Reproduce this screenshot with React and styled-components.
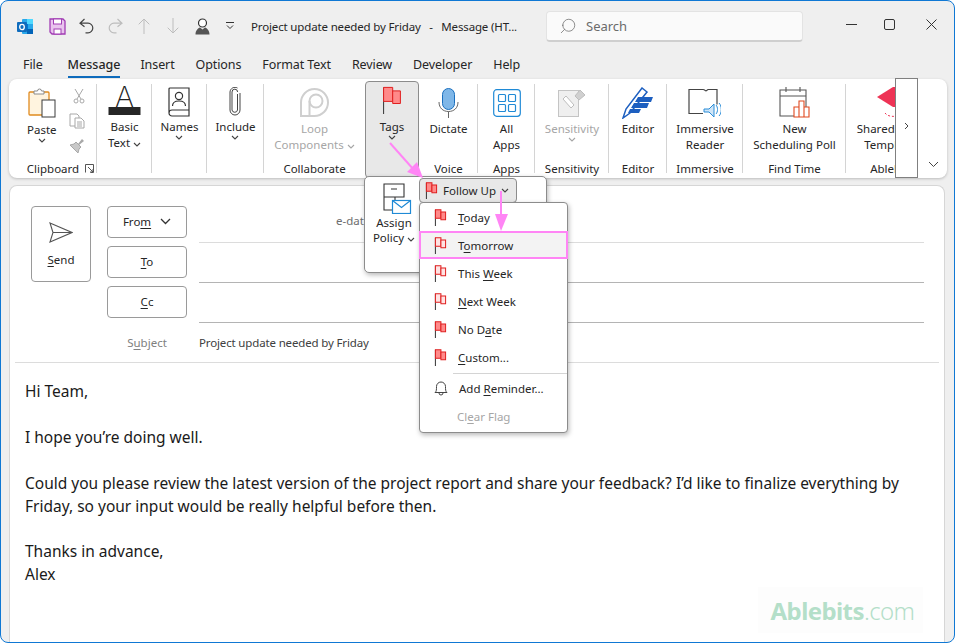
import React from 'react';
import styled, { createGlobalStyle } from 'styled-components';
import { Search } from 'lucide-react';

const GlobalStyle = createGlobalStyle`
  html, body {
    margin: 0;
    width: 955px;
    height: 643px;
    overflow: hidden;
    background: #fff;
  }
  * { box-sizing: border-box; }
  u { text-underline-offset: 2px; }
`;

const UI_FONT = `"Noto Sans", "Open Sans", "Liberation Sans", sans-serif`;

const Frame = styled.div`
  position: relative;
  width: 955px;
  height: 643px;
  display: flex;
  flex-direction: column;
  background: #efefef;
  border: 1px solid #0f78d4;
  border-radius: 8px;
  overflow: hidden;
  font-family: ${UI_FONT};
  font-size: 11.5px;
  color: #262626;
`;

const TitleBar = styled.header`
  height: 50px;
  flex: none;
  display: flex;
  align-items: center;
  padding: 0 3px 0 9px;
`;

const QatSlot = styled.div`
  width: ${p => p.$w}px;
  flex: none;
  display: flex;
  justify-content: center;
  align-items: center;
`;

const WindowTitle = styled.div`
  width: 302px;
  flex: none;
  padding-left: 7px;
  white-space: pre;
  letter-spacing: -0.15px;
`;

const SearchBox = styled.div`
  width: 257px;
  height: 31px;
  flex: none;
  display: flex;
  align-items: center;
  gap: 9px;
  padding-left: 12px;
  background: #fafafa;
  border: 1px solid #e3e3e3;
  border-bottom: 2px solid #cfcfcf;
  border-radius: 4px;
  color: #6b6b6b;
  font-size: 13px;
`;

const WindowControls = styled.div`
  margin-left: auto;
  margin-bottom: 3px;
  display: flex;
`;

const WindowButton = styled.div`
  width: ${p => p.$w}px;
  display: flex;
  justify-content: center;
  align-items: center;
`;

const TabStrip = styled.nav`
  height: 28px;
  flex: none;
  display: flex;
  align-items: center;
  gap: 21px;
  padding-left: 22px;
  font-size: 12.5px;
`;

const Tab = styled.div`
  height: 26px;
  display: flex;
  align-items: center;
  margin-right: ${p => p.$extra || 0}px;
  letter-spacing: ${p => (p.$active ? 0 : -0.1)}px;
  font-weight: ${p => (p.$active ? 500 : 400)};
  border-bottom: 2px solid ${p => (p.$active ? '#0f6cbd' : 'transparent')};
`;

const Ribbon = styled.section`
  position: relative;
  height: 99px;
  flex: none;
  display: flex;
  margin: 0 7px 0 8px;
  background: #fff;
  border-radius: 8px;
  box-shadow: 0 1px 3px rgba(0, 0, 0, 0.22);
`;

const Group = styled.div`
  position: relative;
  width: ${p => p.$w}px;
  flex: none;
  display: flex;
  flex-direction: column;
  align-items: center;
  padding-top: 5px;

  &::after {
    content: '';
    display: ${p => (p.$plain ? 'none' : 'block')};
    position: absolute;
    right: 0;
    top: 5px;
    bottom: 5px;
    width: 1px;
    background: #d4d4d4;
  }
`;

const ClippedGroup = styled(Group)`
  overflow: hidden;
  align-items: flex-start;
`;

const GroupBody = styled.div`
  flex: 1;
  width: ${p => (p.$w ? `${p.$w}px` : '100%')};
  display: flex;
  justify-content: center;
`;

const GroupLabel = styled.div`
  height: 17px;
  width: ${p => (p.$w ? `${p.$w}px` : 'auto')};
  flex: none;
  margin-bottom: 1px;
  line-height: 17px;
  text-align: center;
  white-space: nowrap;
`;

const RibbonButton = styled.div`
  display: flex;
  flex-direction: column;
  align-items: center;
  line-height: 16px;
  text-align: center;
  white-space: nowrap;
  color: ${p => (p.$disabled ? '#a6a6a6' : 'inherit')};
`;

const IconBox = styled.div`
  height: ${p => p.$h}px;
  display: flex;
  align-items: ${p => p.$align || 'flex-start'};
  justify-content: center;
`;

const ClipboardRow = styled.div`
  width: 100%;
  display: flex;
  padding-left: 18px;
  gap: 12px;
`;

const SmallTools = styled.div`
  display: flex;
  flex-direction: column;
  align-items: flex-end;
  width: 16px;
  gap: 9px;
  padding-top: 4px;
`;

const Launcher = styled.svg`
  position: absolute;
  right: 3px;
  bottom: 5px;
`;

const TagsButton = styled.div`
  width: 54px;
  height: 97px;
  flex: none;
  margin-top: 2px;
  padding-top: 4px;
  display: flex;
  flex-direction: column;
  align-items: center;
  line-height: 16px;
  background: #e8e8e8;
  border: 1px solid #8c8c8c;
  border-radius: 4px;
`;

const ScrollButton = styled.div`
  position: absolute;
  right: 29px;
  top: -1px;
  width: 23px;
  height: 100px;
  display: flex;
  align-items: center;
  justify-content: center;
  padding-bottom: 4px;
  background: #fff;
  border: 1px solid #808080;
`;

const CollapseButton = styled.div`
  position: absolute;
  right: 8px;
  bottom: 10px;
  line-height: 0;
`;

const Compose = styled.main`
  flex: 1;
  margin: 7px 9px 0 8px;
  padding-top: 20px;
  background: #fff;
  border: 1px solid #d6d6d6;
  border-bottom: 0;
  border-radius: 8px 8px 0 0;
`;

const HeaderArea = styled.div`
  display: flex;
  align-items: flex-start;
  padding: 0 0 4px 21px;
`;

const SendButton = styled.div`
  width: 60px;
  height: 76px;
  flex: none;
  margin-right: 16px;
  padding-top: 15px;
  display: flex;
  flex-direction: column;
  align-items: center;
  gap: 9px;
  border: 1px solid #9a9a9a;
  border-radius: 4px;
`;

const AddressGrid = styled.div`
  display: grid;
  grid-template-columns: 80px 725px;
  column-gap: 12px;
  row-gap: 3px;
`;

const AddressButton = styled.div`
  height: 32px;
  display: flex;
  align-items: center;
  justify-content: center;
  gap: 9px;
  padding-bottom: 1px;
  border: 1px solid #9a9a9a;
  border-radius: 4px;
`;

const FieldLine = styled.div`
  height: 37px;
  border-bottom: 1px solid ${p => (p.$soft ? '#dcdcdc' : '#b4b4b4')};
`;

const Hint = styled.div`
  padding: 7px 0 0 137px;
  color: #6e6e6e;
`;

const SubjectLabel = styled.div`
  height: 32px;
  display: flex;
  align-items: center;
  justify-content: center;
  color: #808080;
`;

const SubjectValue = styled.div`
  height: 32px;
  display: flex;
  align-items: center;
  color: #404040;
  letter-spacing: -0.15px;
`;

const Divider = styled.div`
  height: 1px;
  margin: 0 5px;
  background: #dcdcdc;
`;

const MessageBody = styled.article`
  padding: 17px 0 0 15px;
  font-size: 15.5px;
  line-height: 22.9px;
  color: #1a1a1a;
`;

const Paragraph = styled.p`
  margin: 0 0 22.9px;
  width: 885px;
`;

const Watermark = styled.div`
  position: absolute;
  left: 757px;
  top: 586px;
  width: 165px;
  height: 46px;
  display: flex;
  align-items: center;
  justify-content: center;
  padding-left: 4px;
  background: #fdfdfd;
  color: #b4dfc9;
  font-size: 24px;
  letter-spacing: -0.6px;
`;

const WatermarkStrong = styled.b`
  font-weight: 700;
`;

const WatermarkLight = styled.span`
  font-weight: 300;
`;

const TagsPopup = styled.div`
  position: absolute;
  left: 363px;
  top: 175px;
  width: 183px;
  height: 97px;
  padding: 6px 0 0 0;
  background: #fff;
  border: 1px solid #8c8c8c;
  border-radius: 5px;
  box-shadow: 1px 2px 5px rgba(0, 0, 0, 0.28);
`;

const PolicyButton = styled.div`
  width: 58px;
  display: flex;
  flex-direction: column;
  align-items: center;
  line-height: 15px;
`;

const PolicyGlyph = styled.div`
  height: 30px;
  padding-left: 6px;
  margin-bottom: 2px;
`;

const FollowUpButton = styled.div`
  position: absolute;
  left: 54px;
  top: 1px;
  width: 98px;
  height: 25px;
  display: flex;
  align-items: center;
  gap: 5px;
  padding-left: 5px;
  background: #e8e8e8;
  border: 1px solid #8c8c8c;
  border-radius: 4px;
`;

const FollowUpMenu = styled.div`
  position: absolute;
  left: 54px;
  top: 25px;
  width: 149px;
  height: 231px;
  padding-top: 0;
  background: #fff;
  border: 1px solid #8c8c8c;
  border-radius: 4px;
  box-shadow: 1px 2px 5px rgba(0, 0, 0, 0.28);
`;

const MenuItem = styled.div`
  height: 28px;
  display: flex;
  align-items: center;
  margin: 0 -1px;
  padding-left: ${p => (p.$hot ? 13 : 15)}px;
  gap: 11px;
  color: ${p => (p.$disabled ? '#a6a6a6' : 'inherit')};
  background: ${p => (p.$hot ? '#f3f3f3' : 'transparent')};
  border: ${p => (p.$hot ? '2px solid #ff85f5' : '0')};
`;

const MenuText = styled.span`
  margin-left: ${p => (p.$noIcon ? 23 : 0)}px;
`;

const MenuSeparator = styled.div`
  height: 1px;
  margin: 2px 0 0 33px;
  background: #d4d4d4;
`;

const ArrowLayer = styled.svg`
  position: absolute;
  left: -1px;
  top: -1px;
  pointer-events: none;
`;

const Caret = ({ color = '#444' }) => (
  <svg width="8" height="5" viewBox="0 0 8 5" fill="none">
    <path d="M1 1l3 3 3-3" stroke={color} strokeWidth="1.1" />
  </svg>
);

const OutlookIcon = () => (
  <svg width="17" height="17" viewBox="0 0 17 17">
    <rect x="5" y="1" width="11" height="15" rx="1" fill="#28a8ea" />
    <rect x="10" y="1" width="6" height="5" fill="#50d9ff" />
    <rect x="5" y="6" width="6" height="5" fill="#0078d4" />
    <rect x="10" y="11" width="6" height="5" fill="#0364b8" />
    <rect x="0" y="4" width="10" height="10" rx="1" fill="#0f6cbd" />
    <ellipse cx="5" cy="9" rx="2.3" ry="2.7" fill="none" stroke="#fff" strokeWidth="1.3" />
  </svg>
);

const SaveIcon = () => (
  <svg width="17" height="17" viewBox="0 0 17 17">
    <path d="M1 1h13l2 2v13H3l-2-2z" fill="#e9c4ee" stroke="#a13cb4" strokeWidth="1.3" />
    <rect x="4.5" y="1" width="8" height="5" fill="#fff" stroke="#a13cb4" />
    <rect x="5" y="11" width="7" height="5" fill="#fff" stroke="#a13cb4" />
  </svg>
);

const UndoIcon = ({ color, flip }) => (
  <svg width="15" height="16" viewBox="0 0 15 16" fill="none" style={flip ? { transform: 'scaleX(-1)' } : undefined}>
    <path d="M5.5 1L1 5.2l4.5 3.6M1 5.2h8a4.8 4.8 0 0 1 0 9.6H6.5" stroke={color} strokeWidth="1.2" />
  </svg>
);

const QatArrow = ({ down }) => (
  <svg width="12" height="16" viewBox="0 0 12 16" fill="none" stroke="#bdbdbd" style={down ? { transform: 'scaleY(-1)' } : undefined}>
    <path d="M6 1v15M.7 6.300L6 1l5.300 5.300" />
  </svg>
);

const PersonIcon = () => (
  <svg width="15" height="17" viewBox="0 0 15 17">
    <circle cx="7.5" cy="5" r="4" fill="#fff" stroke="#333" strokeWidth="1.2" />
    <path d="M0.5 16.5c0-4 2.5-6.5 4.5-7l2.5 2 2.5-2c2 .5 4.5 3 4.5 7z" fill="#555" />
  </svg>
);

const QatMore = () => (
  <svg width="10" height="8" viewBox="0 0 10 8" fill="none" stroke="#333">
    <path d="M1 .5h8M2 3.500l3 3 3-3" />
  </svg>
);

const PasteIcon = () => (
  <svg width="28" height="32" viewBox="0 0 28 32">
    <rect x="1" y="5" width="20" height="23" rx="1" fill="#fff4df" stroke="#e08a1e" strokeWidth="1.3" />
    <path d="M6 7V4h3.500a2 2 0 0 1 4 0H16v3z" fill="#fff" stroke="#8a8a8a" />
    <rect x="14" y="13" width="13" height="17" fill="#fff" stroke="#3a3a3a" />
  </svg>
);

const ScissorsIcon = () => (
  <svg width="12" height="16" viewBox="0 0 12 16" fill="none" stroke="#a8a8a8">
    <path d="M2 1l6 10M10 1L4 11" />
    <circle cx="3" cy="13" r="2" />
    <circle cx="9" cy="13" r="2" />
  </svg>
);

const CopyIcon = () => (
  <svg width="16" height="16" viewBox="0 0 16 16" fill="#fff" stroke="#a8a8a8">
    <path d="M1 1h7l2 2v10H1z" />
    <path d="M6 5h6l3 3v7H6z" />
    <path d="M8 9h5M8 11h5M8 13h5" />
  </svg>
);

const BrushIcon = () => (
  <svg width="16" height="16" viewBox="0 0 16 16">
    <path d="M9 6l4-5 2 2-5 4z" fill="#a8a8a8" />
    <path d="M7 4l5 5-2 2-1 4-8-8 4-1z" fill="#c8c8c8" stroke="#a8a8a8" />
  </svg>
);

const BasicTextIcon = () => (
  <svg width="33" height="32" viewBox="0 0 33 32" overflow="visible">
    <text x="16.5" y="22.500" textAnchor="middle" fontFamily="Inter, 'Open Sans', sans-serif" fontWeight="200" fontSize="29" fill="#222">A</text>
    <rect x="0.500" y="23" width="32" height="8" fill="#262626" />
  </svg>
);

const NamesIcon = () => (
  <svg width="22" height="30" viewBox="0 0 22 30" fill="none" stroke="#333" strokeWidth="1.2">
    <path d="M1 26V2a1 1 0 0 1 1-1h19v28H4a3 3 0 0 1-3-3a3 3 0 0 1 3-3h17" />
    <circle cx="11" cy="9" r="3.6" />
    <path d="M4.5 19c0-3.5 3-5 6.5-5s6.500 1.500 6.500 5" />
  </svg>
);

const PaperclipIcon = () => (
  <svg width="12" height="29" viewBox="0 0 12 29" fill="none" stroke="#444" strokeWidth="1">
    <path d="M8.500 7v16a2.800 2.800 0 0 1-5.500 0V5a2.800 2.800 0 0 1 5.600 0" />
    <path d="M11 6v17a5 5 0 0 1-10 0V5a5 5 0 0 1 7.500-4" />
  </svg>
);

const LoopIcon = () => (
  <svg width="29" height="29" viewBox="0 0 29 29" fill="none" stroke="#cfcfcf" strokeWidth="2">
    <path d="M1 28V14.500a13.500 13.500 0 1 1 13.500 13.500z" />
    <circle cx="16" cy="13" r="6.500" />
    <path d="M9.500 13v15" />
  </svg>
);

const FlagIcon = ({ width = 12, height = 17, light }) => {
  const fill = light ? '#ffe3e3' : '#ff8a8a';
  return (
    <svg width={width} height={height} viewBox="0 0 14 20">
      <path d="M1 1v19" stroke="#333" fill="none" vectorEffect="non-scaling-stroke" />
      <rect x="1" y="1" width="6.500" height="10" fill={fill} stroke="#e01f1f" vectorEffect="non-scaling-stroke" />
      <rect x="7.500" y="3.500" width="5.500" height="9" fill={fill} stroke="#e01f1f" vectorEffect="non-scaling-stroke" />
    </svg>
  );
};

const MicIcon = () => (
  <svg width="21" height="30" viewBox="0 0 21 30">
    <rect x="4.500" y="0.500" width="12" height="21" rx="6" fill="#7fb7e8" stroke="#1a6fbe" />
    <path d="M1 14c0 6 4 9.500 9.500 9.500S20 20 20 14" fill="none" stroke="#666" />
    <path d="M10.500 23.500V30" stroke="#666" />
  </svg>
);

const AppsIcon = () => (
  <svg width="28" height="28" viewBox="0 0 28 28" fill="none" stroke="#1f8ad6" strokeWidth="1.2">
    <rect x="0.700" y="0.700" width="26.600" height="26.600" rx="3" />
    <rect x="5.500" y="5.500" width="7" height="7" rx="1" />
    <rect x="15.500" y="5.500" width="7" height="7" rx="1" />
    <rect x="5.500" y="15.500" width="7" height="7" rx="1" />
    <rect x="15.500" y="15.500" width="7" height="7" rx="1" />
  </svg>
);

const SensitivityIcon = () => (
  <svg width="28" height="29" viewBox="0 0 28 29">
    <rect x="0.500" y="2.500" width="20" height="26" fill="#efefef" stroke="#c4c4c4" />
    <path d="M5 11l8 9 3-3-8-9z" fill="#fff" stroke="#bdbdbd" />
    <path d="M17 8l5-6 5 5-6 5z" fill="#d0d0d0" stroke="#bdbdbd" />
  </svg>
);

const EditorIcon = () => (
  <svg width="32" height="32" viewBox="0 0 32 32">
    <path d="M1 31l3-9L20 1l5 4L8 26z" fill="#fff" stroke="#1d5fc0" strokeWidth="1.500" />
    <path d="M16 10h15l-2 5H13zM12 16h15l-2 5H9zM8 22h11l-2 4H6z" fill="#1d5fc0" />
  </svg>
);

const ReaderIcon = () => (
  <svg width="33" height="30" viewBox="0 0 33 30" fill="none">
    <path d="M15 1.500H1v24h14M15 1.500c2 0 2 1.500 3 1.500l2-1.500h9v15" stroke="#444" strokeWidth="1.200" />
    <path d="M16 21h5l5-5v13l-5-5h-5z" fill="#cfe5f7" stroke="#2a8dd8" />
    <path d="M28 17c2 2 2 7 0 9M31 15c3 3 3 10 0 13" stroke="#2a8dd8" />
  </svg>
);

const PollIcon = () => (
  <svg width="31" height="31" viewBox="0 0 31 31" fill="none">
    <path d="M27 27V3H1v26h14M1 9h26M7 0v5M21 0v5" stroke="#555" strokeWidth="1.100" />
    <path d="M15 30V20h5v10zM20 30V14h5v16zM25 30V20h5v10z" stroke="#e0481e" strokeWidth="1.100" fill="#fff" />
  </svg>
);

const SharedIcon = () => (
  <svg width="30" height="33" viewBox="0 0 30 33" fill="none">
    <path d="M0 11L16 1H30V21H16z" fill="#ee3355" />
    <path d="M8 27c2 3 7 4 12 3" stroke="#ee3355" strokeDasharray="2 2" />
  </svg>
);

const SendIcon = () => (
  <svg width="24" height="21" viewBox="0 0 24 21" fill="none" stroke="#555" strokeWidth="1.100">
    <path d="M1 1l22 9.500L1 20l3-9.500zM4 10.500h19" />
  </svg>
);

const PolicyIcon = () => (
  <svg width="29" height="31" viewBox="0 0 29 31" fill="none">
    <path d="M1 1h20v13H1zM1 14h11v13H1zM8 6h6" stroke="#333" strokeWidth="1.100" />
    <rect x="9.500" y="17.500" width="18" height="13" fill="#fff" stroke="#1f8ad6" strokeWidth="1.200" />
    <path d="M9.500 17.500l9 7 9-7" stroke="#1f8ad6" strokeWidth="1.200" />
  </svg>
);

const BellIcon = () => (
  <svg width="14" height="16" viewBox="0 0 14 16" fill="none" stroke="#444">
    <path d="M1 12.500c1.500-1 1.500-3 1.500-6a4.500 4.500 0 0 1 9 0c0 3 0 5 1.500 6z" />
    <path d="M5 13a2 2 0 0 0 4 0" />
  </svg>
);

const FOLLOW_UP_ITEMS = [
  { before: '', key: 'T', after: 'oday' },
  { before: 'T', key: 'o', after: 'morrow', light: true, hot: true },
  { before: 'This ', key: 'W', after: 'eek', light: true },
  { before: '', key: 'N', after: 'ext Week', light: true },
  { before: 'No D', key: 'a', after: 'te' },
  { before: '', key: 'C', after: 'ustom...' },
];

const App = () => (
  <>
    <GlobalStyle />
    <Frame>
      <TitleBar>
        <QatSlot $w={30}><OutlookIcon /></QatSlot>
        <QatSlot $w={34}><SaveIcon /></QatSlot>
        <QatSlot $w={25}><UndoIcon color="#444" /></QatSlot>
        <QatSlot $w={32}><UndoIcon color="#bdbdbd" flip /></QatSlot>
        <QatSlot $w={25}><QatArrow /></QatSlot>
        <QatSlot $w={33}><QatArrow down /></QatSlot>
        <QatSlot $w={27}><PersonIcon /></QatSlot>
        <QatSlot $w={28}><QatMore /></QatSlot>
        <WindowTitle>Project update needed by Friday   -   Message (HT...</WindowTitle>
        <SearchBox>
          <Search size={18} strokeWidth={1} style={{ transform: 'scaleX(-1)' }} />
          Search
        </SearchBox>
        <WindowControls>
          <WindowButton $w={32}>
            <svg width="11" height="2" viewBox="0 0 11 2"><rect width="11" height="1" fill="#333" /></svg>
          </WindowButton>
          <WindowButton $w={44}>
            <svg width="11" height="11" viewBox="0 0 11 11" fill="none" stroke="#333"><rect x=".5" y=".5" width="10" height="10" rx="1.500" /></svg>
          </WindowButton>
          <WindowButton $w={40}>
            <svg width="11" height="11" viewBox="0 0 11 11" fill="none" stroke="#333"><path d="M.5.5l10 10M10.500.5l-10 10" /></svg>
          </WindowButton>
        </WindowControls>
      </TitleBar>

      <TabStrip>
        <Tab $extra={4}>File</Tab>
        <Tab $active $extra={-1}>Message</Tab>
        <Tab>Insert</Tab>
        <Tab>Options</Tab>
        <Tab>Format Text</Tab>
        <Tab>Review</Tab>
        <Tab>Developer</Tab>
        <Tab>Help</Tab>
      </TabStrip>

      <Ribbon>
        <Group $w={88}>
          <ClipboardRow>
            <RibbonButton>
              <IconBox $h={38} $align="center"><PasteIcon /></IconBox>
              Paste
              <Caret />
            </RibbonButton>
            <SmallTools>
              <ScissorsIcon />
              <CopyIcon />
              <BrushIcon />
            </SmallTools>
          </ClipboardRow>
          <GroupBody />
          <GroupLabel>Clipboard</GroupLabel>
          <Launcher width="9" height="9" viewBox="0 0 9 9" fill="none" stroke="#555">
            <path d="M.5 8.500V.5h8v8h-3M3 3l5 5M8 5v3H5" />
          </Launcher>
        </Group>
        <Group $w={55}>
          <GroupBody>
            <RibbonButton>
              <IconBox $h={35}><BasicTextIcon /></IconBox>
              Basic
              <span>Text <Caret /></span>
            </RibbonButton>
          </GroupBody>
        </Group>
        <Group $w={55}>
          <GroupBody>
            <RibbonButton>
              <IconBox $h={35} $align="center"><NamesIcon /></IconBox>
              Names
              <Caret />
            </RibbonButton>
          </GroupBody>
        </Group>
        <Group $w={57}>
          <GroupBody>
            <RibbonButton>
              <IconBox $h={35} $align="center"><PaperclipIcon /></IconBox>
              Include
              <Caret />
            </RibbonButton>
          </GroupBody>
        </Group>
        <Group $w={101} $plain>
          <GroupBody>
            <RibbonButton $disabled>
              <IconBox $h={37} $align="center"><LoopIcon /></IconBox>
              Loop
              <span>Components <Caret color="#a6a6a6" /></span>
            </RibbonButton>
          </GroupBody>
          <GroupLabel>Collaborate</GroupLabel>
        </Group>
        <TagsButton>
          <IconBox $h={33}><FlagIcon width={20} height={28} /></IconBox>
          Tags
          <Caret />
        </TagsButton>
        <Group $w={59}>
          <GroupBody>
            <RibbonButton>
              <IconBox $h={37} $align="center"><MicIcon /></IconBox>
              Dictate
            </RibbonButton>
          </GroupBody>
          <GroupLabel>Voice</GroupLabel>
        </Group>
        <Group $w={57}>
          <GroupBody>
            <RibbonButton>
              <IconBox $h={37} $align="center"><AppsIcon /></IconBox>
              All
              <span>Apps</span>
            </RibbonButton>
          </GroupBody>
          <GroupLabel>Apps</GroupLabel>
        </Group>
        <Group $w={74}>
          <GroupBody>
            <RibbonButton $disabled>
              <IconBox $h={37} $align="center"><SensitivityIcon /></IconBox>
              Sensitivity
              <Caret color="#a6a6a6" />
            </RibbonButton>
          </GroupBody>
          <GroupLabel>Sensitivity</GroupLabel>
        </Group>
        <Group $w={58}>
          <GroupBody>
            <RibbonButton>
              <IconBox $h={37} $align="center"><EditorIcon /></IconBox>
              Editor
            </RibbonButton>
          </GroupBody>
          <GroupLabel>Editor</GroupLabel>
        </Group>
        <Group $w={76}>
          <GroupBody>
            <RibbonButton>
              <IconBox $h={37} $align="center"><ReaderIcon /></IconBox>
              Immersive
              <span>Reader</span>
            </RibbonButton>
          </GroupBody>
          <GroupLabel>Immersive</GroupLabel>
        </Group>
        <Group $w={103}>
          <GroupBody>
            <RibbonButton>
              <IconBox $h={37} $align="center"><PollIcon /></IconBox>
              New
              <span>Scheduling Poll</span>
            </RibbonButton>
          </GroupBody>
          <GroupLabel>Find Time</GroupLabel>
        </Group>
        <ClippedGroup $w={50} $plain>
          <GroupBody $w={92}>
            <RibbonButton>
              <IconBox $h={37} $align="center"><SharedIcon /></IconBox>
              Shared Email
              <span>Templates</span>
            </RibbonButton>
          </GroupBody>
          <GroupLabel $w={92}>Ablebits</GroupLabel>
        </ClippedGroup>
        <ScrollButton>
          <svg width="5" height="8" viewBox="0 0 5 8" fill="none" stroke="#444"><path d="M1 1l3 3-3 3" /></svg>
        </ScrollButton>
        <CollapseButton>
          <svg width="11" height="7" viewBox="0 0 11 7" fill="none" stroke="#444"><path d="M1 1l4.500 4.500L10 1" /></svg>
        </CollapseButton>
      </Ribbon>

      <Compose>
        <HeaderArea>
          <SendButton>
            <SendIcon />
            <span><u>S</u>end</span>
          </SendButton>
          <AddressGrid>
            <AddressButton>
              <span>Fro<u>m</u></span>
              <svg width="11" height="7" viewBox="0 0 11 7" fill="none" stroke="#333" strokeWidth="1.300"><path d="M1 1l4.500 4.500L10 1" /></svg>
            </AddressButton>
            <FieldLine $soft><Hint>e-dat</Hint></FieldLine>
            <AddressButton><span><u>T</u>o</span></AddressButton>
            <FieldLine />
            <AddressButton><span><u>C</u>c</span></AddressButton>
            <FieldLine />
            <SubjectLabel><span>S<u>u</u>bject</span></SubjectLabel>
            <SubjectValue>Project update needed by Friday</SubjectValue>
          </AddressGrid>
        </HeaderArea>
        <Divider />
        <MessageBody>
          <Paragraph>Hi Team,</Paragraph>
          <Paragraph>I hope you’re doing well.</Paragraph>
          <Paragraph>Could you please review the latest version of the project report and share your feedback? I’d like to finalize everything by Friday, so your input would be really helpful before then.</Paragraph>
          <Paragraph>Thanks in advance,<br />Alex</Paragraph>
        </MessageBody>
      </Compose>

      <Watermark>
        <WatermarkStrong>Ablebits</WatermarkStrong>
        <WatermarkLight>.com</WatermarkLight>
      </Watermark>

      <TagsPopup>
        <PolicyButton>
          <PolicyGlyph><PolicyIcon /></PolicyGlyph>
          <span>Assign</span>
          <span>Policy <Caret /></span>
        </PolicyButton>
        <FollowUpButton>
          <FlagIcon width={13} height={17} />
          Follow Up
          <Caret />
        </FollowUpButton>
        <FollowUpMenu>
          {FOLLOW_UP_ITEMS.map(item => (
            <MenuItem key={item.after} $hot={item.hot}>
              <FlagIcon width={13} height={17} light={item.light} />
              <span>{item.before}<u>{item.key}</u>{item.after}</span>
            </MenuItem>
          ))}
          <MenuSeparator />
          <MenuItem>
            <BellIcon />
            <span>Add <u>R</u>eminder...</span>
          </MenuItem>
          <MenuItem $disabled>
            <MenuText $noIcon>Cl<u>e</u>ar Flag</MenuText>
          </MenuItem>
        </FollowUpMenu>
      </TagsPopup>

      <ArrowLayer width="955" height="643" viewBox="0 0 955 643">
        <path d="M390 143L414 170" stroke="#ff85f5" strokeWidth="2" />
        <path d="M423 178L407 172L417 162z" fill="#ff85f5" />
        <path d="M501 191V218" stroke="#ff85f5" strokeWidth="2" />
        <path d="M501 231L495 214H508z" fill="#ff85f5" />
      </ArrowLayer>
    </Frame>
  </>
);

export default App;
